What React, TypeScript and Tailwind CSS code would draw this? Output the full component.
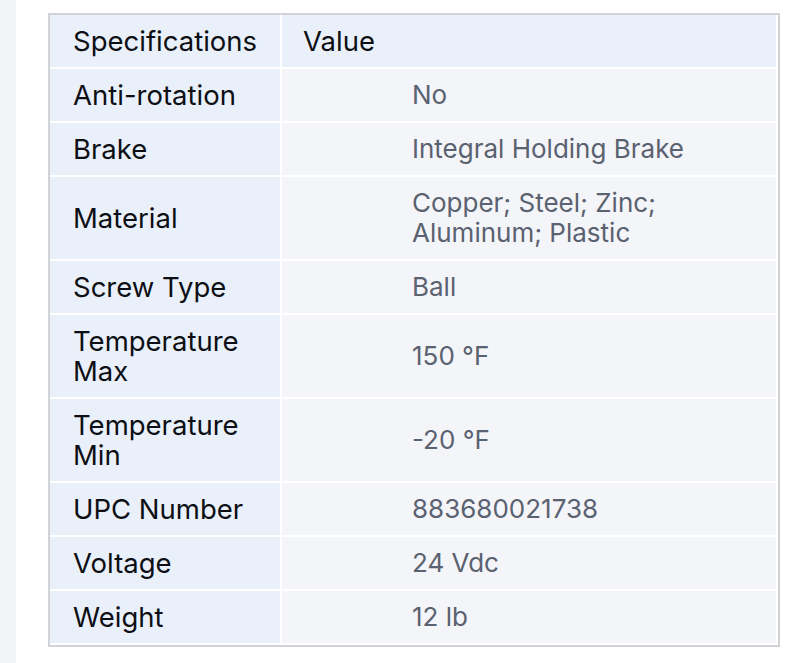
const SPECS: { label: string; value: string }[] = [
  { label: "Anti-rotation", value: "No" },
  { label: "Brake", value: "Integral Holding Brake" },
  { label: "Material", value: "Copper; Steel; Zinc;\nAluminum; Plastic" },
  { label: "Screw Type", value: "Ball" },
  { label: "Temperature Max", value: "150 °F" },
  { label: "Temperature Min", value: "-20 °F" },
  { label: "UPC Number", value: "883680021738" },
  { label: "Voltage", value: "24 Vdc" },
  { label: "Weight", value: "12 lb" },
];

export default function App() {
  return (
    <div className="flex min-h-[663px] w-[808px] bg-white font-['Inter',sans-serif] text-[26px] leading-[30px]">
      <div className="w-4 shrink-0 bg-[#f2f4f8]" />
      <div className="pl-8 pt-[13px]">
        <div className="grid w-[732px] grid-cols-[230px_1fr] gap-[2px] border-2 border-[#d2d3d6] pr-[2px] pb-[2px] bg-white">
          <div className="bg-[#e9f0fa] py-[11px] pl-[23px] text-[27.5px] text-[#0d0f14]">Specifications</div>
          <div className="bg-[#e9f0fa] py-[11px] pl-[21px] text-[27.5px] text-[#0d0f14]">Value</div>
          {SPECS.map((s) => (
            <div key={s.label} className="contents">
              <div className="flex items-center bg-[#e9f0fa] py-[11px] pl-[23px] pr-3 text-[27.5px] text-[#0d0f14]">
                {s.label}
              </div>
              <div className="flex items-center whitespace-pre-line bg-[#f3f5f9] py-[11px] pl-[130px] pr-4 text-[#5a6170]">
                {s.value}
              </div>
            </div>
          ))}
        </div>
      </div>
    </div>
  );
}
